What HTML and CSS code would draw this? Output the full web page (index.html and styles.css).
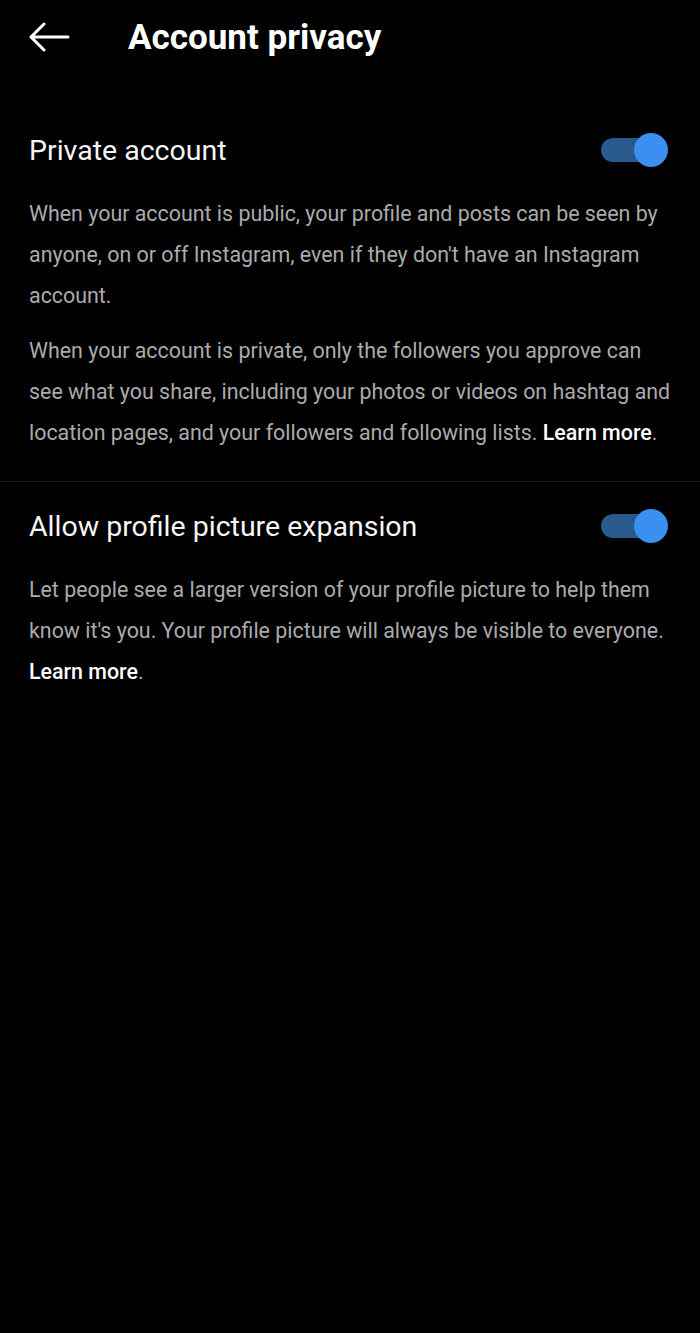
FILE: index.html
```html
<html>

<head>
  <meta charset="utf8">
  <title>Account privacy</title>
  <link rel="stylesheet" href="styles.css">
</head>

<body>
  <header class="topbar">
    <svg class="back" width="42" height="30" viewBox="0 0 42 30">
      <path d="M40 15H3M16 2L3 15l13 13" fill="none" stroke="#fff" stroke-width="3" stroke-linecap="round" stroke-linejoin="round"/>
    </svg>
    <h1>Account privacy</h1>
  </header>

  <section class="setting">
    <div class="row">
      <h2>Private account</h2>
      <span class="toggle on"><span class="knob"></span></span>
    </div>
    <p>When your account is public, your profile and posts can be seen by anyone, on or off Instagram, even if they don't have an Instagram account.</p>
    <p>When your account is private, only the followers you approve can see what you share, including your photos or videos on hashtag and location pages, and your followers and following lists. <a href="#">Learn more</a>.</p>
  </section>

  <section class="setting">
    <div class="row">
      <h2>Allow profile picture expansion</h2>
      <span class="toggle on"><span class="knob"></span></span>
    </div>
    <p>Let people see a larger version of your profile picture to help them know it's you. Your profile picture will always be visible to everyone. <a href="#">Learn more</a>.</p>
  </section>
</body>

</html>
```

FILE: styles.css
```css
body {
  margin: 0;
  background: #000;
  color: #fff;
  font-family: Roboto, "Noto Sans", sans-serif;
  height: 1333px;
  overflow: hidden;
}

.topbar {
  display: flex;
  align-items: center;
  height: 74px;
  padding: 0 28px;
}

.back {
  flex: none;
}

h1 {
  margin: 0 0 0 58px;
  font-size: 35px;
  font-weight: 700;
}

.setting {
  padding: 50px 29px 28px 29px;
  border-bottom: 1px solid #1c1c1c;
}

.setting:last-child {
  border-bottom: none;
  padding-top: 18px;
}

.row {
  display: flex;
  align-items: center;
  justify-content: space-between;
  height: 52px;
  margin-bottom: 17px;
}

h2 {
  margin: 0;
  font-size: 28.5px;
  font-weight: 400;
  color: #f5f5f5;
}

.toggle {
  position: relative;
  width: 50px;
  height: 24px;
  margin-right: 20px;
  border-radius: 12px;
  background: #2a5a8c;
}

.knob {
  position: absolute;
  top: -5px;
  right: -17px;
  width: 34px;
  height: 34px;
  border-radius: 50%;
  background: #3a8ff0;
}

p {
  margin: 0 0 14px 0;
  font-size: 21.4px;
  line-height: 41px;
  color: #ababab;
}

p:last-child {
  margin-bottom: 0;
}

a {
  color: #fff;
  font-weight: 500;
  text-decoration: none;
}
```
